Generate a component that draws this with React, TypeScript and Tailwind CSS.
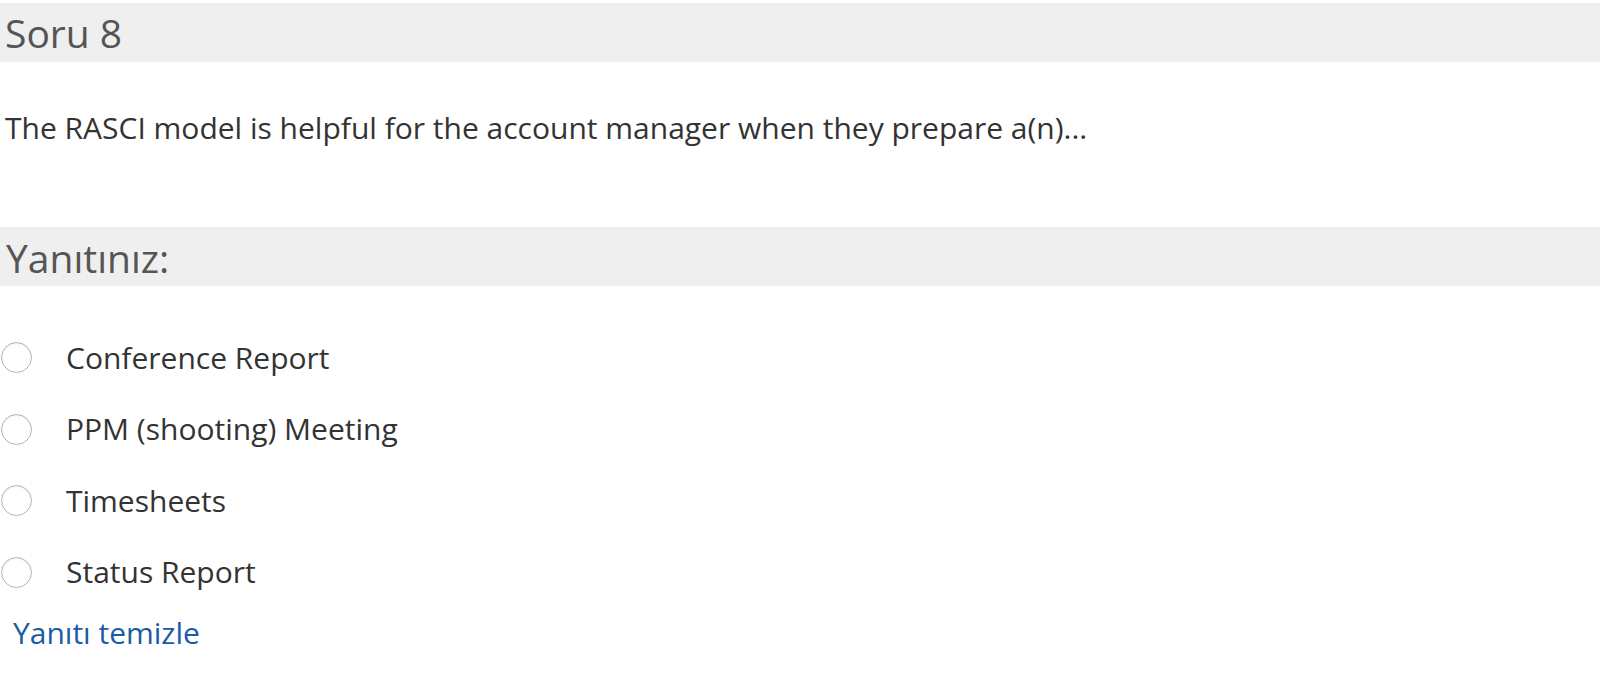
const OPTIONS = ['Conference Report', 'PPM (shooting) Meeting', 'Timesheets', 'Status Report'];

export default function App() {
  return (
    <div className="min-h-screen bg-white font-['Open_Sans',sans-serif] text-[#333]">
      {/* Question header */}
      <div className="mt-[3px] h-[59px] bg-[#efefef] pl-[5px] text-[39px] leading-[59px] text-[#555]">
        Soru 8
      </div>

      {/* Question text */}
      <p className="mt-[46px] pl-[5px] text-[30px] leading-[40px]">
        The RASCI model is helpful for the account manager when they prepare a(n)...
      </p>

      {/* Answer header */}
      <div className="mt-[79px] h-[59px] bg-[#efefef] pl-[6px] pt-[2px] text-[39px] leading-[57px] text-[#555]">
        Yanıtınız:
      </div>

      {/* Options */}
      <div className="mt-[36px] flex flex-col">
        {OPTIONS.map((label) => (
          <label key={label} className="flex h-[71.5px] items-center">
            <span className="ml-[1px] h-[31px] w-[31px] shrink-0 rounded-full border border-[#b5b5b5] bg-white shadow-[inset_0_1px_2px_rgba(0,0,0,0.08)]" />
            <span className="ml-[34px] text-[30px] leading-[40px]">{label}</span>
          </label>
        ))}
      </div>

      <a className="mt-[5px] block pl-[13px] text-[30px] leading-[40px] text-[#1a5ba6]">
        Yanıtı temizle
      </a>
    </div>
  );
}
